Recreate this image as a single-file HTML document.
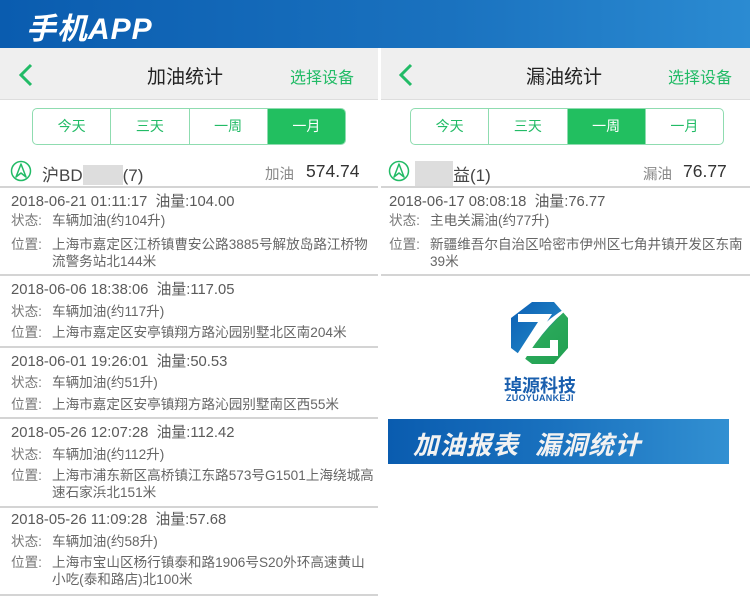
<!DOCTYPE html>
<html><head><meta charset="utf-8"><style>
*{margin:0;padding:0;box-sizing:border-box}
body{width:750px;height:598px;overflow:hidden;background:#fff;font-family:"Liberation Sans","Noto Sans CJK SC",sans-serif;position:relative;color:#555}
.a{position:absolute;white-space:nowrap}
.top{left:0;top:0;width:750px;height:48px;background:linear-gradient(90deg,#0a5caf,#1a72bf 60%,#2b8bd2)}
.nav{top:48px;height:52px;background:#efefef;border-bottom:1px solid #ddd}
.seg{top:108px;height:37px;border:1px solid #8fdcb0;border-radius:5px;display:flex;overflow:hidden}
.seg div{flex:1;text-align:center;line-height:35px;font-size:14px;color:#22bb66;border-right:1px solid #8fdcb0}
.seg div:last-child{border-right:none}
.seg .on{background:#22bf60;color:#fff}
.hr{height:2px;background:#d4d4d4}
.d{font-size:14.8px;color:#5a5a5a;line-height:18px}
.s{font-size:13.6px;color:#777;line-height:17px}
.s i{font-style:normal;display:inline-block;width:41px}
.s b{font-weight:normal;color:#666}
</style></head><body>
<div class="a top"></div>
<div class="a" style="left:26px;top:4px;font-size:30px;font-weight:bold;font-style:italic;color:#fff;letter-spacing:1px">手机APP</div>

<!-- left panel -->
<div class="a nav" style="left:0;width:378px"></div>
<svg class="a" style="left:17px;top:62px" width="18" height="26"><path d="M14 3L4 13L14 23" stroke="#22bb66" stroke-width="3" fill="none"/></svg>
<div class="a" style="left:147px;top:62px;font-size:19px;color:#222">加油统计</div>
<div class="a" style="left:290px;top:64px;font-size:16px;color:#22bb66">选择设备</div>
<div class="a seg" style="left:32px;width:314px"><div>今天</div><div>三天</div><div>一周</div><div class="on">一月</div></div>
<svg class="a" style="left:10px;top:160px" width="22" height="22"><circle cx="11" cy="11" r="9.5" stroke="#22bb66" stroke-width="1.5" fill="none"/><path d="M11 4L6 17L11 13L16 17Z" stroke="#22bb66" stroke-width="1.5" fill="none" stroke-linejoin="round"/></svg>
<div class="a" style="left:42px;top:161px;font-size:17px;color:#444">沪BD<span style="display:inline-block;width:40px;height:20px;background:#ddd;vertical-align:-4px"></span>(7)</div>
<div class="a" style="left:265px;top:163px;font-size:14.5px;color:#888">加油</div>
<div class="a" style="left:306px;top:161px;font-size:17.5px;color:#333">574.74</div>
<div class="a hr" style="left:0;top:186px;width:378px"></div>

<div class="a d" style="left:11px;top:193px">2018-06-21 01:11:17 &nbsp;油量:104.00</div>
<div class="a s" style="left:11px;top:212px"><i>状态:</i><b>车辆加油(约104升)</b></div>
<div class="a s" style="left:11px;top:236px"><i>位置:</i><b>上海市嘉定区江桥镇曹安公路3885号解放岛路江桥物</b></div>
<div class="a s" style="left:52px;top:253px"><b>流警务站北144米</b></div>
<div class="a hr" style="left:0;top:274px;width:378px"></div>

<div class="a d" style="left:11px;top:281px">2018-06-06 18:38:06 &nbsp;油量:117.05</div>
<div class="a s" style="left:11px;top:303px"><i>状态:</i><b>车辆加油(约117升)</b></div>
<div class="a s" style="left:11px;top:324px"><i>位置:</i><b>上海市嘉定区安亭镇翔方路沁园别墅北区南204米</b></div>
<div class="a hr" style="left:0;top:346px;width:378px"></div>

<div class="a d" style="left:11px;top:353px">2018-06-01 19:26:01 &nbsp;油量:50.53</div>
<div class="a s" style="left:11px;top:374px"><i>状态:</i><b>车辆加油(约51升)</b></div>
<div class="a s" style="left:11px;top:396px"><i>位置:</i><b>上海市嘉定区安亭镇翔方路沁园别墅南区西55米</b></div>
<div class="a hr" style="left:0;top:417px;width:378px"></div>

<div class="a d" style="left:11px;top:424px">2018-05-26 12:07:28 &nbsp;油量:112.42</div>
<div class="a s" style="left:11px;top:446px"><i>状态:</i><b>车辆加油(约112升)</b></div>
<div class="a s" style="left:11px;top:467px"><i>位置:</i><b>上海市浦东新区高桥镇江东路573号G1501上海绕城高</b></div>
<div class="a s" style="left:52px;top:484px"><b>速石家浜北151米</b></div>
<div class="a hr" style="left:0;top:506px;width:378px"></div>

<div class="a d" style="left:11px;top:511px">2018-05-26 11:09:28 &nbsp;油量:57.68</div>
<div class="a s" style="left:11px;top:533px"><i>状态:</i><b>车辆加油(约58升)</b></div>
<div class="a s" style="left:11px;top:554px"><i>位置:</i><b>上海市宝山区杨行镇泰和路1906号S20外环高速黄山</b></div>
<div class="a s" style="left:52px;top:571px"><b>小吃(泰和路店)北100米</b></div>
<div class="a hr" style="left:0;top:594px;width:378px"></div>

<!-- right panel -->
<div class="a nav" style="left:381px;width:369px"></div>
<svg class="a" style="left:397px;top:62px" width="18" height="26"><path d="M14 3L4 13L14 23" stroke="#22bb66" stroke-width="3" fill="none"/></svg>
<div class="a" style="left:526px;top:62px;font-size:19px;color:#222">漏油统计</div>
<div class="a" style="left:668px;top:64px;font-size:16px;color:#22bb66">选择设备</div>
<div class="a seg" style="left:410px;width:314px"><div>今天</div><div>三天</div><div class="on">一周</div><div>一月</div></div>
<svg class="a" style="left:388px;top:160px" width="22" height="22"><circle cx="11" cy="11" r="9.5" stroke="#22bb66" stroke-width="1.5" fill="none"/><path d="M11 4L6 17L11 13L16 17Z" stroke="#22bb66" stroke-width="1.5" fill="none" stroke-linejoin="round"/></svg>
<div class="a" style="left:415px;top:161px;font-size:17px;color:#444"><span style="display:inline-block;width:38px;height:27px;background:#ddd;vertical-align:-7px"></span>益(1)</div>
<div class="a" style="left:643px;top:163px;font-size:14.5px;color:#888">漏油</div>
<div class="a" style="left:683px;top:161px;font-size:17.5px;color:#333">76.77</div>
<div class="a hr" style="left:381px;top:186px;width:369px"></div>
<div class="a d" style="left:389px;top:193px">2018-06-17 08:08:18 &nbsp;油量:76.77</div>
<div class="a s" style="left:389px;top:212px"><i>状态:</i><b>主电关漏油(约77升)</b></div>
<div class="a s" style="left:389px;top:236px"><i>位置:</i><b>新疆维吾尔自治区哈密市伊州区七角井镇开发区东南</b></div>
<div class="a s" style="left:430px;top:253px"><b>39米</b></div>
<div class="a hr" style="left:381px;top:274px;width:369px"></div>

<svg class="a" style="left:508px;top:300px" width="70" height="68">
<defs><linearGradient id="g" x1="0" y1="0" x2="1" y2="1"><stop offset="0" stop-color="#0d5fb5"/><stop offset=".5" stop-color="#1a7ac0"/><stop offset=".55" stop-color="#2aa85a"/><stop offset="1" stop-color="#20a050"/></linearGradient></defs>
<path d="M24 2L46 2L60 18L60 48L46 64L24 64L3 48L3 18Z" fill="url(#g)"/>
<path d="M10 14L44 14L22 48L42 48L42 40L50 40L50 56L8 56L30 22L10 22Z" fill="#fff"/>
<path d="M8 60Q30 20 70 2Q40 20 14 64Z" fill="#fff"/>
</svg>
<div class="a" style="left:504px;top:372px;font-size:18px;font-weight:bold;color:#1a5fae">琸源科技</div>
<div class="a" style="left:506px;top:393px;font-size:9px;font-weight:bold;color:#1a5fae;letter-spacing:0.3px">ZUOYUANKEJI</div>
<div class="a" style="left:388px;top:419px;width:341px;height:45px;background:linear-gradient(90deg,#0a5caf,#1a72bf 50%,#3290d2)"></div>
<div class="a" style="left:413px;top:425px;font-size:25.5px;font-weight:bold;font-style:italic;color:#f2f2f2;letter-spacing:1px">加油报表&nbsp;&nbsp;漏洞统计</div>
</body></html>
